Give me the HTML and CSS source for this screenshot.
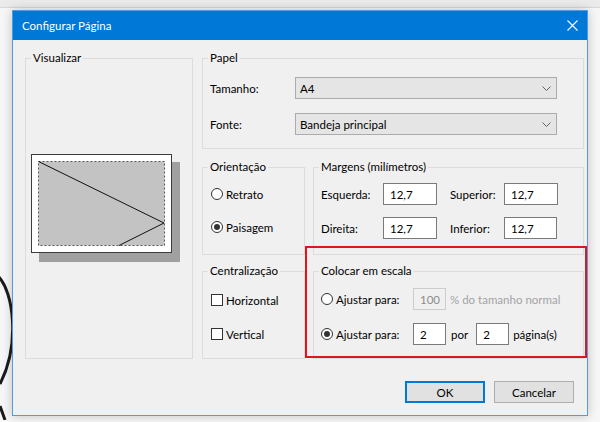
FILE: index.html
```html
<!DOCTYPE html>
<html lang="pt">
<head>
  <meta charset="UTF-8" />
  <title>Configurar Página</title>
  <link rel="stylesheet" href="styles.css">
</head>
<body>
  <div class="topbar"></div>
  <!-- pen mark behind the dialog -->
  <svg class="scribble" width="30" height="160" viewBox="0 0 30 160">
    <path d="M -2 16 C 14 32, 20 85, 0 124" fill="none" stroke="#1c1c1c" stroke-width="3" />
    <path d="M 0 146 L 5 160" fill="none" stroke="#1c1c1c" stroke-width="3" />
  </svg>

  <div class="dialog">
    <div class="titlebar">
      <span>Configurar Página</span>
      <svg class="close" width="11" height="11" viewBox="0 0 11 11">
        <path d="M0.5 0.5 L10.5 10.5 M10.5 0.5 L0.5 10.5" stroke="#fff" stroke-width="1.1" />
      </svg>
    </div>

    <div class="content">
      <!-- Preview -->
      <div class="group preview-group">
        <div class="group-title">Visualizar</div>
        <svg class="preview" width="150" height="108" viewBox="0 0 150 108">
          <rect x="8" y="8" width="141" height="100" fill="#a0a0a0" />
          <rect x="0.5" y="0.5" width="140" height="98" fill="#fff" stroke="#3c3c3c" />
          <rect x="7.5" y="7.5" width="126" height="84" fill="#c3c3c3" stroke="#555" stroke-dasharray="2 2" />
          <path d="M7.5 7.5 L133 69 L88 91.5" fill="none" stroke="#111" stroke-width="1" />
        </svg>
      </div>

      <div class="right-col">
        <!-- Paper -->
        <div class="group paper">
          <div class="group-title">Papel</div>
          <div class="paper-grid">
            <label>Tamanho:</label>
            <div class="combo">
              <span>A4</span>
              <svg width="9" height="5" viewBox="0 0 9 5"><path d="M0.5 0.5 L4.5 4.5 L8.5 0.5" fill="none" stroke="#606060" /></svg>
            </div>
            <label>Fonte:</label>
            <div class="combo">
              <span>Bandeja principal</span>
              <svg width="9" height="5" viewBox="0 0 9 5"><path d="M0.5 0.5 L4.5 4.5 L8.5 0.5" fill="none" stroke="#606060" /></svg>
            </div>
          </div>
        </div>

        <div class="row">
          <!-- Orientation -->
          <div class="group narrow">
            <div class="group-title">Orientação</div>
            <div class="options">
              <div class="option"><span class="radio"></span>Retrato</div>
              <div class="option"><span class="radio checked"></span>Paisagem</div>
            </div>
          </div>
          <!-- Margins -->
          <div class="group wide">
            <div class="group-title">Margens (milímetros)</div>
            <div class="margin-grid">
              <label>Esquerda:</label>
              <input type="text" value="12,7" />
              <label>Superior:</label>
              <input type="text" value="12,7" />
              <label>Direita:</label>
              <input type="text" value="12,7" />
              <label>Inferior:</label>
              <input type="text" value="12,7" />
            </div>
          </div>
        </div>

        <div class="row row-last">
          <!-- Centering -->
          <div class="group narrow">
            <div class="group-title">Centralização</div>
            <div class="options options-check">
              <div class="option"><span class="check"></span>Horizontal</div>
              <div class="option"><span class="check"></span>Vertical</div>
            </div>
          </div>
          <!-- Scaling -->
          <div class="group wide">
            <div class="group-title">Colocar em escala</div>
            <div class="scale-rows">
              <div class="scale-row">
                <div class="option scale-label"><span class="radio"></span>Ajustar para:</div>
                <input type="text" class="small" value="100" disabled />
                <span class="muted">% do tamanho normal</span>
              </div>
              <div class="scale-row">
                <div class="option scale-label"><span class="radio checked"></span>Ajustar para:</div>
                <input type="text" class="small" value="2" />
                <span class="por">por</span>
                <input type="text" class="small" value="2" />
                <span class="pages">página(s)</span>
              </div>
            </div>
          </div>
        </div>
      </div>
    </div>

    <div class="buttons">
      <button class="btn btn-default">OK</button>
      <button class="btn">Cancelar</button>
    </div>

    <div class="highlight"></div>
  </div>
</body>
</html>
```

FILE: styles.css
```css
* {
  box-sizing: border-box;
}
body {
  margin: 0;
  background: #f7f7f7;
  font-family: 'Segoe UI', Lato, sans-serif;
  font-size: 11.5px;
  color: #000;
  position: relative;
  height: 422px;
  overflow: hidden;
}
.topbar {
  height: 8px;
  background: #ebebeb;
  border-bottom: 1px solid #d8d8d8;
}
.scribble {
  position: absolute;
  left: 0;
  top: 260px;
}
.dialog {
  position: relative;
  margin: 2px 0 0 12px;
  width: 576px;
  height: 406px;
  background: #f0f0f0;
  border: 1px solid #4f9ce0;
  box-shadow: 0 0 10px rgba(0, 0, 0, 0.22);
}
.titlebar {
  height: 29px;
  background: #0078d7;
  color: #fff;
  display: flex;
  align-items: center;
  justify-content: space-between;
  padding: 0 9px 0 9px;
}
.content {
  display: flex;
  gap: 9px;
  padding: 18px 3px 0 12px;
}
.group {
  border: 1px solid #dcdcdc;
}
.group-title {
  width: fit-content;
  margin: -9px 0 0 5px;
  padding: 0 2px;
  line-height: 16px;
  background: #f0f0f0;
}
.preview-group {
  width: 168px;
  height: 301px;
}
.preview {
  display: block;
  margin: 88px 0 0 5px;
}
.right-col {
  width: 382px;
}
.paper {
  height: 91px;
}
.paper-grid {
  display: grid;
  grid-template-columns: 85px 262px;
  grid-auto-rows: 22px;
  row-gap: 14px;
  align-items: center;
  padding: 11px 0 0 7px;
}
.combo {
  height: 22px;
  background: #e5e5e5;
  border: 1px solid #acacac;
  display: flex;
  align-items: center;
  justify-content: space-between;
  padding: 0 5px 0 4px;
}
.row {
  display: flex;
  gap: 8px;
  margin-top: 18px;
}
.row-last {
  margin-top: 16px;
}
.narrow {
  width: 103px;
  height: 88px;
}
.wide {
  width: 271px;
  height: 88px;
}
.options {
  display: flex;
  flex-direction: column;
  gap: 11px;
  padding: 8px 0 0 8px;
}
.options-check {
  padding-top: 10px;
  gap: 12px;
}
.option {
  height: 22px;
  display: flex;
  align-items: center;
  gap: 3px;
}
.radio {
  width: 12px;
  height: 12px;
  border: 1px solid #333;
  border-radius: 50%;
  background: #fff;
  display: flex;
  align-items: center;
  justify-content: center;
}
.radio.checked::after {
  content: '';
  width: 6px;
  height: 6px;
  border-radius: 50%;
  background: #333;
}
.check {
  width: 12px;
  height: 12px;
  border: 1px solid #333;
  background: #fff;
}
.margin-grid {
  display: grid;
  grid-template-columns: 62px 67px 54px 53px;
  grid-auto-rows: 22px;
  row-gap: 12px;
  align-items: center;
  padding: 8px 0 0 7px;
}
input {
  font: inherit;
  color: #000;
  height: 22px;
  width: 54px;
  padding: 0 0 0 6px;
  border: 1px solid #7a7a7a;
  background: #fff;
  outline: none;
}
.margin-grid input:last-child {
  width: 53px;
}
.scale-rows {
  display: flex;
  flex-direction: column;
  gap: 13px;
  padding: 9px 0 0 7px;
}
.scale-row {
  display: flex;
  align-items: center;
  height: 22px;
}
.scale-label {
  width: 92px;
}
input.small {
  width: 33px;
}
input:disabled {
  background: #f0f0f0;
  border-color: #cccccc;
  color: #8c8c8c;
}
.muted {
  color: #a3a3a3;
  margin-left: 4px;
}
.por {
  margin: 0 8px 0 5px;
}
.pages {
  margin-left: 4px;
}
.buttons {
  display: flex;
  justify-content: flex-end;
  gap: 9px;
  padding: 22px 13px 0 0;
}
.btn {
  font: inherit;
  color: #000;
  width: 80px;
  height: 22px;
  background: #e1e1e1;
  border: 1px solid #adadad;
  padding: 0;
}
.btn-default {
  border: 2px solid #0078d7;
}
.highlight {
  position: absolute;
  left: 292px;
  top: 235px;
  width: 282px;
  height: 112px;
  border: 2px solid #e0161e;
}
```
